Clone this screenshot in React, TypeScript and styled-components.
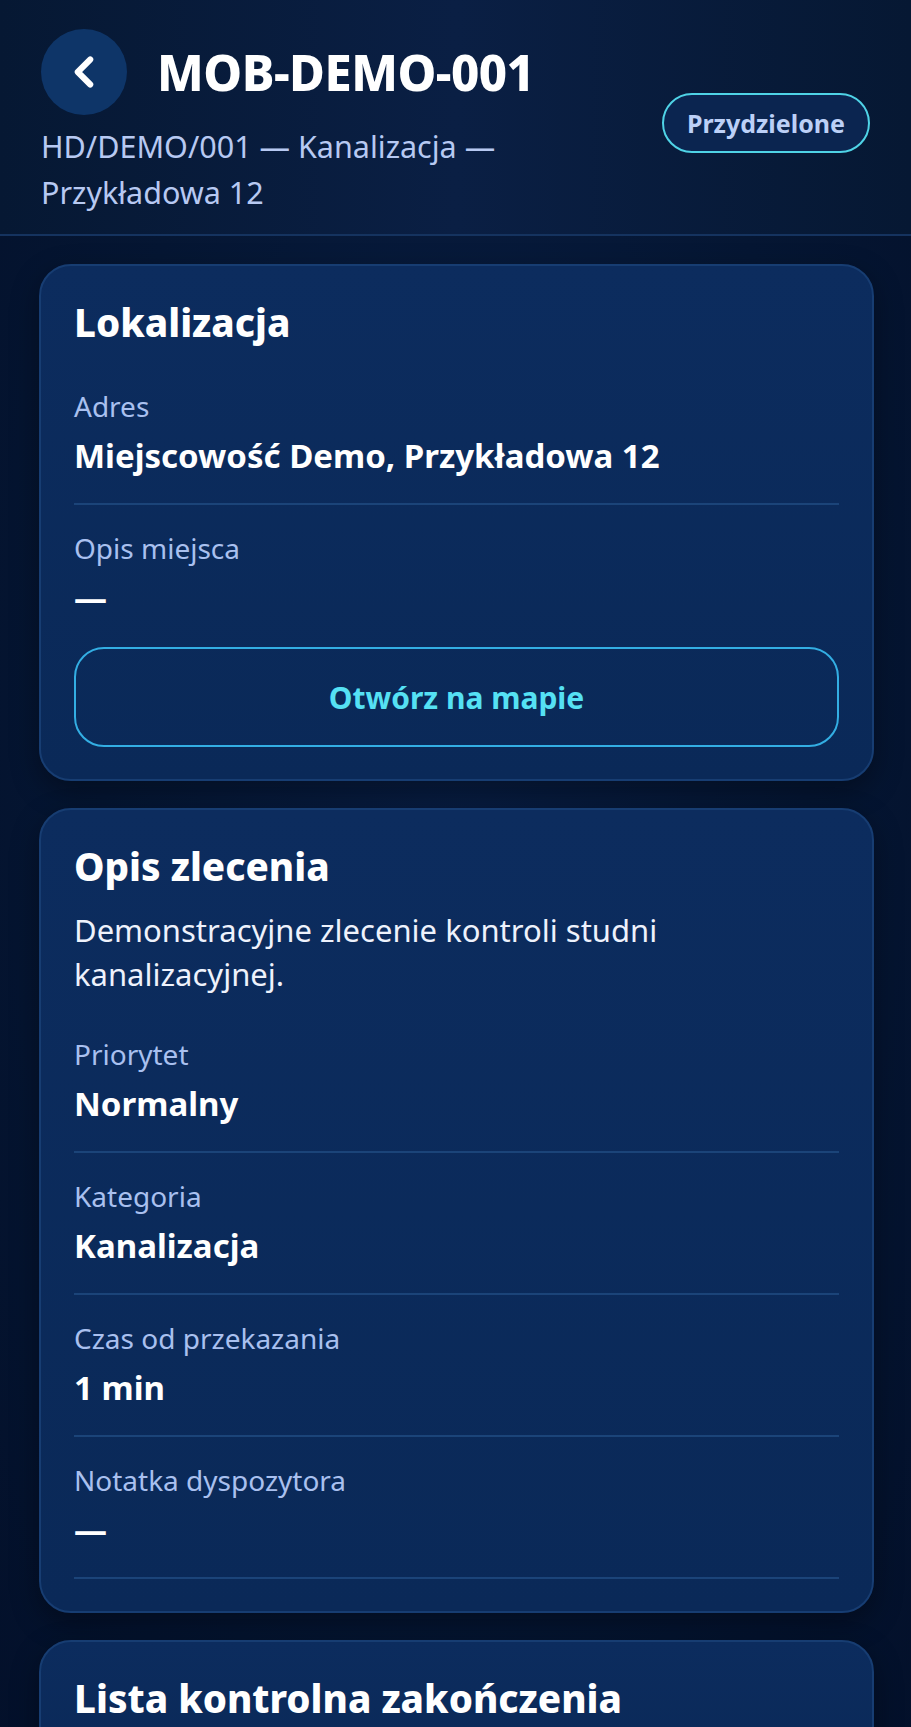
import styled, { createGlobalStyle } from 'styled-components';
import { ChevronLeft } from 'lucide-react';

const GlobalStyle = createGlobalStyle`
    html, body {
        margin: 0;
        padding: 0;
        background: #04122b;
    }
    body {
        font-family: "Noto Sans", "Open Sans", sans-serif;
        -webkit-font-smoothing: antialiased;
        color: #ffffff;
    }
    * {
        box-sizing: border-box;
    }
`;

const Page = styled.div`
    min-height: 1727px;
    background: radial-gradient(ellipse at 50% 40%, #081d42 0%, #051633 55%, #03102a 100%);
`;

const Header = styled.header`
    display: flex;
    justify-content: space-between;
    align-items: flex-start;
    gap: 32px;
    padding: 29px 41px 19px;
    background: linear-gradient(90deg, #061833 0%, #0a1f44 50%, #061833 100%);
    border-bottom: 2px solid #15335f;
`;

const HeaderMain = styled.div`
    flex: 1;
    min-width: 0;
`;

const TitleRow = styled.div`
    display: flex;
    align-items: center;
    gap: 30px;
`;

const BackButton = styled.button`
    width: 86px;
    height: 86px;
    border-radius: 50%;
    border: none;
    background: #0e3568;
    color: #ffffff;
    display: flex;
    align-items: center;
    justify-content: center;
    padding: 0;
    cursor: pointer;
`;

const Title = styled.h1`
    margin: 0;
    font-size: 49px;
    font-weight: 800;
    line-height: 1;
    letter-spacing: -0.5px;
    color: #ffffff;
`;

const Subtitle = styled.div`
    margin-top: 8px;
    font-size: 30.5px;
    line-height: 46px;
    color: #b7c9f2;
`;

const Badge = styled.div`
    margin-top: 64px;
    flex-shrink: 0;
    height: 60px;
    padding: 0 23px;
    display: flex;
    align-items: center;
    border: 2px solid #4fd3e6;
    border-radius: 30px;
    background: #0b2550;
    color: #bcd0f7;
    font-size: 25px;
    font-weight: 700;
`;

const Main = styled.main`
    display: flex;
    flex-direction: column;
    gap: 27px;
    padding: 28px 37px 0 39px;
`;

const Card = styled.section`
    background: linear-gradient(180deg, #0c2c5e 0%, #0a2958 100%);
    border: 2px solid #173d72;
    border-radius: 32px;
    padding: 32px 33px 32px;
    box-shadow: 0 10px 28px rgba(0, 0, 0, 0.35);
`;

const CardTitle = styled.h2<{ spacing: number }>`
    margin: 0 0 ${props => props.spacing}px;
    font-size: 38.5px;
    font-weight: 800;
    line-height: 48px;
    color: #ffffff;
`;

const Description = styled.p`
    margin: 0 0 15px;
    font-size: 31px;
    line-height: 44px;
    color: #eef2fc;
`;

const Row = styled.div<{ last?: boolean }>`
    padding: 25px 0 ${props => props.last ? '24px' : '26px'};
    border-bottom: ${props => props.last ? 'none' : '2px solid #1b4479'};
`;

const Label = styled.div`
    font-size: 28px;
    line-height: 36px;
    color: #a9c0ef;
`;

const Value = styled.div`
    margin-top: 11px;
    font-size: 33px;
    font-weight: 700;
    line-height: 42px;
    color: #ffffff;
`;

const MapButton = styled.button`
    margin-top: 4px;
    width: 100%;
    height: 100px;
    border: 2px solid #33aee3;
    border-radius: 30px;
    background: transparent;
    color: #55e1f4;
    font-family: "Noto Sans", "Open Sans", sans-serif;
    font-size: 30px;
    font-weight: 700;
    cursor: pointer;
`;

type FieldProps = {
    label: string;
    value: string;
    last?: boolean;
};

function Field(props: FieldProps) {
    return (
        <Row last={props.last}>
            <Label>{props.label}</Label>
            <Value>{props.value}</Value>
        </Row>
    );
}

export default function App() {
    return (
        <>
            <GlobalStyle />
            <Page>
                <Header>
                    <HeaderMain>
                        <TitleRow>
                            <BackButton aria-label="Wstecz">
                                <ChevronLeft size={50} strokeWidth={2.9} />
                            </BackButton>
                            <Title>MOB-DEMO-001</Title>
                        </TitleRow>
                        <Subtitle>HD/DEMO/001 — Kanalizacja — Przykładowa 12</Subtitle>
                    </HeaderMain>
                    <Badge>Przydzielone</Badge>
                </Header>
                <Main>
                    <Card>
                        <CardTitle spacing={17}>Lokalizacja</CardTitle>
                        <Field label="Adres" value="Miejscowość Demo, Przykładowa 12" />
                        <Field label="Opis miejsca" value="—" last />
                        <MapButton>Otwórz na mapie</MapButton>
                    </Card>
                    <Card>
                        <CardTitle spacing={18}>Opis zlecenia</CardTitle>
                        <Description>Demonstracyjne zlecenie kontroli studni kanalizacyjnej.</Description>
                        <Field label="Priorytet" value="Normalny" />
                        <Field label="Kategoria" value="Kanalizacja" />
                        <Field label="Czas od przekazania" value="1 min" />
                        <Field label="Notatka dyspozytora" value="—" />
                    </Card>
                    <Card>
                        <CardTitle spacing={18}>Lista kontrolna zakończenia</CardTitle>
                    </Card>
                </Main>
            </Page>
        </>
    );
}
